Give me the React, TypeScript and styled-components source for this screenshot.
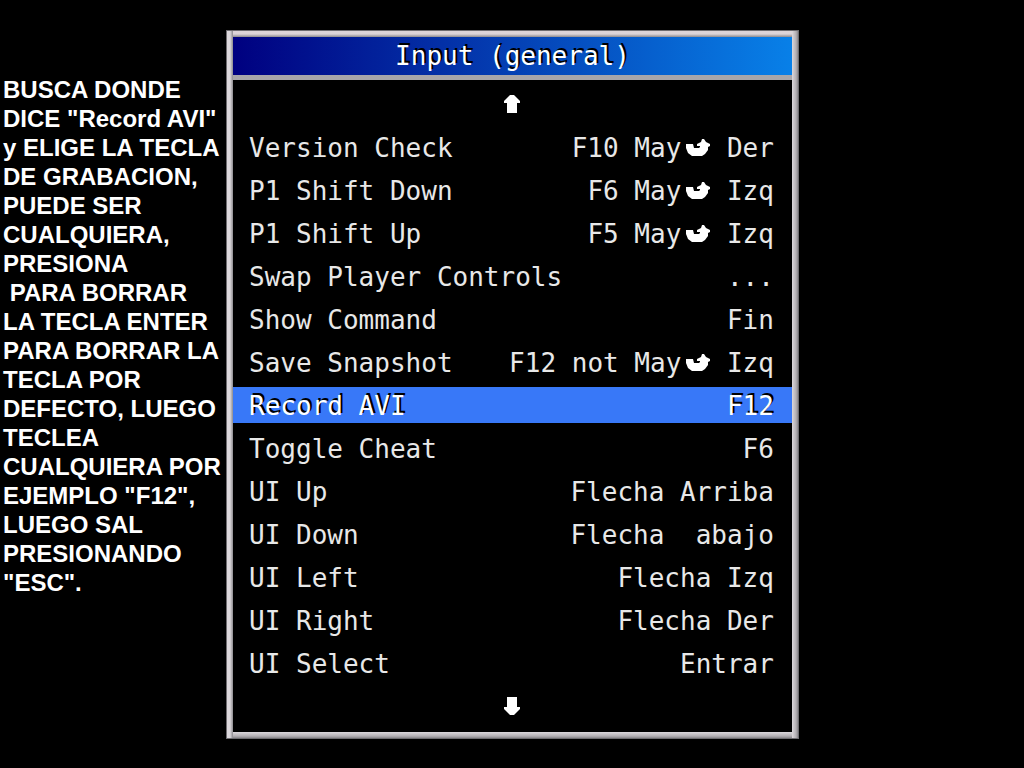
import React from "react";
import styled, { createGlobalStyle, css } from "styled-components";

const GlobalStyle = createGlobalStyle`
  * { box-sizing: border-box; }
  body { margin: 0; background: #000; }
`;

const Page = styled.main`
  display: grid;
  grid-template-columns: 22% 56%;
  align-items: start;
  min-height: 100vh;
  padding: 30px 0 30px 1px;
  background: #000;
  color: #fff;
`;

const Note = styled.p`
  margin: 45px 0 0;
  padding-left: 2px;
  font: bold 24px/29px "Liberation Sans", Arial, sans-serif;
  white-space: pre;
`;

const Panel = styled.section`
  border: 1px solid #6e6c70;
  padding: 6px;
  background:
    linear-gradient(#000, #000) content-box,
    linear-gradient(90deg, #dcd8dc 0 3px, #8c8a8e 6px, transparent 6px),
    linear-gradient(270deg, #8a888c 0, #b4b0b4 2px, #dcd8dc 6px, transparent 6px),
    linear-gradient(180deg, #dcd4d8 0 3px, #8c8a8e 6px, transparent 6px),
    linear-gradient(0deg, #8a888c 0, #b4b0b4 2px, #dcd8dc 6px);
  font: 26px/36px "DejaVu Sans Mono", monospace;
  color: #e8e8e8;
`;

const Title = styled.h1`
  margin: 0;
  height: 43px;
  border-bottom: 5px solid #a8a6aa;
  background: linear-gradient(90deg, #000080, #0880e8);
  color: #fff;
  font: inherit;
  line-height: 38px;
  text-align: center;
  text-shadow: 2px -2px 0 #000;
`;

const Menu = styled.div`
  display: flex;
  flex-direction: column;
  gap: 7px;
  padding: 6px 0 8px;
`;

const plainButton = css`
  display: flex;
  align-items: center;
  width: 100%;
  height: 36px;
  margin: 0;
  border: 0;
  background: transparent;
  color: inherit;
  font: inherit;
  cursor: pointer;
`;

const ScrollButton = styled.button`
  ${plainButton}
  justify-content: center;
  padding: 0;
`;

const Items = styled.ul`
  display: flex;
  flex-direction: column;
  gap: 7px;
  margin: 0;
  padding: 0;
  list-style: none;
`;

const Item = styled.button<{ $selected: boolean }>`
  ${plainButton}
  justify-content: space-between;
  padding: 1px 18px 0 16px;
  ${({ $selected }) =>
    $selected &&
    css`
      background: #3878f8;
      color: #fff;
      text-shadow: 2px -2px 0 #000;
    `}
`;

const Binding = styled.span`
  display: flex;
  align-items: center;
  white-space: pre;
`;

const Glyph = styled.svg`
  display: block;
  fill: #fff;
`;

type Entry = { label: string; keys: string; modified?: string };

const entries: Entry[] = [
  { label: "Version Check", keys: "F10 May", modified: " Der" },
  { label: "P1 Shift Down", keys: "F6 May", modified: " Izq" },
  { label: "P1 Shift Up", keys: "F5 May", modified: " Izq" },
  { label: "Swap Player Controls", keys: "..." },
  { label: "Show Command", keys: "Fin" },
  { label: "Save Snapshot", keys: "F12 not May", modified: " Izq" },
  { label: "Record AVI", keys: "F12" },
  { label: "Toggle Cheat", keys: "F6" },
  { label: "UI Up", keys: "Flecha Arriba" },
  { label: "UI Down", keys: "Flecha  abajo" },
  { label: "UI Left", keys: "Flecha Izq" },
  { label: "UI Right", keys: "Flecha Der" },
  { label: "UI Select", keys: "Entrar" },
];

const note = `BUSCA DONDE
DICE "Record AVI"
y ELIGE LA TECLA
DE GRABACION,
PUEDE SER
CUALQUIERA,
PRESIONA
 PARA BORRAR
LA TECLA ENTER
PARA BORRAR LA
TECLA POR
DEFECTO, LUEGO
TECLEA
CUALQUIERA POR
EJEMPLO "F12",
LUEGO SAL
PRESIONANDO
"ESC".`;

const UpArrow = () => (
  <Glyph width="16" height="18" viewBox="0 0 16 18" aria-hidden="true">
    <path d="M6 0h4l2 2 2 2 2 2v2h-3v10H3V8H0V6l2-2 2-2z" />
  </Glyph>
);

const DownArrow = () => (
  <Glyph width="16" height="18" viewBox="0 0 16 18" aria-hidden="true">
    <path d="M6 18h4l2-2 2-2 2-2v-2h-3V0H3v10H0v2l2 2 2 2z" />
  </Glyph>
);

const ShiftArrow = () => (
  <Glyph width="30" height="20" viewBox="0 0 30 20" aria-hidden="true">
    <path d="M5 6H12L13 10H18L19 9V8H16V6L20 4L21 1H23L25 4L29 6V8L27 9V12L24 16L21 18H11L7 15L5 10Z" />
  </Glyph>
);

export default function App() {
  return (
    <>
      <GlobalStyle />
      <Page>
        <Note>{note}</Note>
        <Panel>
          <Title>Input (general)</Title>
          <Menu>
            <ScrollButton type="button" aria-label="Subir">
              <UpArrow />
            </ScrollButton>
            <Items>
              {entries.map(({ label, keys, modified }) => (
                <li key={label}>
                  <Item type="button" $selected={label === "Record AVI"}>
                    <span>{label}</span>
                    <Binding>
                      {keys}
                      {modified && <ShiftArrow />}
                      {modified}
                    </Binding>
                  </Item>
                </li>
              ))}
            </Items>
            <ScrollButton type="button" aria-label="Bajar">
              <DownArrow />
            </ScrollButton>
          </Menu>
        </Panel>
      </Page>
    </>
  );
}
